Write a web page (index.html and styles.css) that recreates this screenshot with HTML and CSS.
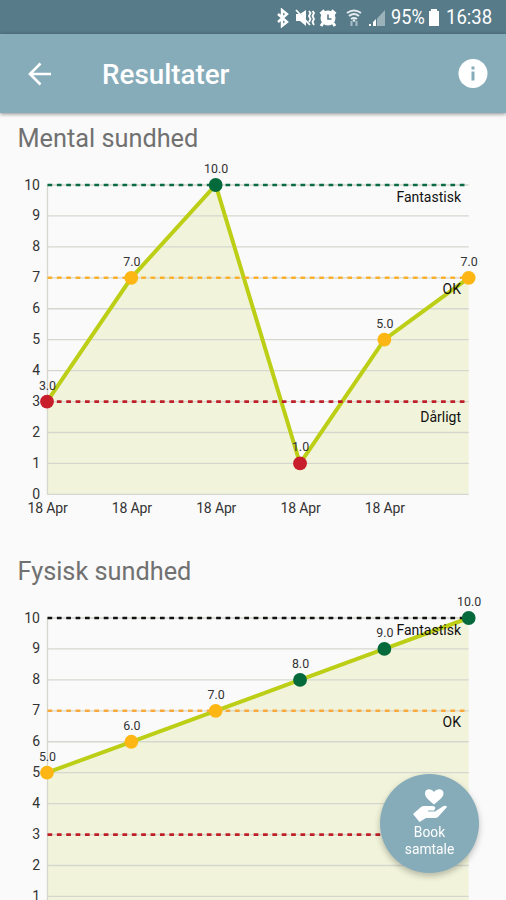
FILE: index.html
```html
<!DOCTYPE html>
<html lang="da">
<head>
    <meta charset="UTF-8">
    <meta name="viewport" content="width=device-width, initial-scale=1.0">
    <title>Resultater</title>
    <link rel="stylesheet" href="styles.css">
</head>
<body>
    <div class="status-bar">
        <svg class="bluetooth" width="14" height="20" viewBox="0 0 14 20">
            <path d="M2 6l9 8-5 4V2l5 4-9 8" fill="none" stroke="#fff" stroke-width="2.4"/>
        </svg>
        <svg class="mute" width="20" height="18" viewBox="0 0 20 18">
            <path d="M1 5h4l6-4v16l-6-5H1z" fill="#fff"/>
            <path d="M1 0l14 16" stroke="#577b89" stroke-width="1"/>
            <path d="M1 1l14 15M14 2l1.500 2-1.500 3 1.500 3-1.500 3M17.500 2l1.500 2-1.500 3 1.500 3-1.500 3 1.500 3" fill="none" stroke="#fff" stroke-width="1.8"/>
        </svg>
        <svg class="alarm" width="18" height="18" viewBox="0 0 18 18">
            <circle cx="9" cy="9" r="7.500" fill="#fff"/>
            <path d="M1.500 5l4-3.500M16.500 5l-4-3.500M4 14l-2 3M14 14l2 3" stroke="#fff" stroke-width="3"/>
            <path d="M9 5.500v4.500h3.500" fill="none" stroke="#577b89" stroke-width="1.6"/>
        </svg>
        <svg class="wifi" width="16" height="18" viewBox="0 0 16 18">
            <path d="M1 4q7-5 14 0M3 7q5-4 10 0M5 10q3-2 6 0" fill="none" stroke="#e4ebee" stroke-width="2.1"/>
            <circle cx="8" cy="11.500" r="1.3" fill="#e4ebee"/>
            <path d="M5.500 12v5M10.500 12v5" stroke="#a8bdc5" stroke-width="2"/>
        </svg>
        <svg class="signal" width="18" height="18" viewBox="0 0 18 18">
            <path d="M9 9.500l8-8.500v16H9z" fill="#9bb2bb"/>
            <path d="M1 15h2v2H1zM5 13l3-3V17H5z" fill="#fff"/>
        </svg>
        <span class="status-text percent">95%</span>
        <svg class="battery" width="12" height="18" viewBox="0 0 12 18">
            <path d="M1 2h2V0h6v2h2v15H1z" fill="#fff"/>
        </svg>
        <span class="status-text clock">16:38</span>
    </div>

    <header class="toolbar">
        <svg class="back" width="24" height="24" viewBox="0 0 24 24">
            <path d="M23 12H2M12.500 1.500L2 12l10.500 10.500" fill="none" stroke="#fff" stroke-width="2.6"/>
        </svg>
        <h1>Resultater</h1>
        <svg class="info" width="30" height="30" viewBox="0 0 30 30">
            <circle cx="15" cy="14.500" r="14.500" fill="#fff"/>
            <path d="M13.500 7.500h3v3h-3zM13.500 12.500h3v9h-3z" fill="#86acba"/>
        </svg>
    </header>

    <main>
        <section class="result">
            <h2>Mental sundhed</h2>
            <svg class="chart" id="mental" width="506" height="391"></svg>
        </section>
        <section class="result">
            <h2>Fysisk sundhed</h2>
            <svg class="chart" id="fysisk" width="506" height="391"></svg>
        </section>
    </main>

    <button class="book">
        <svg width="34" height="34" viewBox="0 0 34 34">
            <path d="M21 16.500C16.500 12.500 12 9.500 12 5.500C12 .5 18 0 21 4C24 0 30.500 .5 30.500 5.500C30.500 9.500 25.500 12.500 21 16.500z" fill="#fff"/>
            <path d="M0 26l8-7q1.500-1 3-1h9q3 .5 2 3l-1 1.500h-6v1h7l8.500-5.500q3-1 3.500 1L25 29q-1 1-3 1h-9l-6.500 4z" fill="#fff"/>
        </svg>
        <span>Book<br>samtale</span>
    </button>

    <script>
        const left = 47;
        const right = 468.7;
        const top10 = 30;
        const step = 30.94;
        const stepX = (right - left) / 5;

        function y(value) {
            return top10 + (10 - value) * step;
        }

        function pointColor(value) {
            if (value <= 3) return '#c81e2b';
            if (value <= 7) return '#fdb614';
            return '#046a3c';
        }

        function drawChart(id, values, limits) {
            const points = values.map((v, i) => [left + i * stepX, y(v)]);
            const line = points.map(p => p.join(',')).join(' ');
            let svg = '';

            svg += `<polygon class="area" points="${left},${y(0)} ${line} ${right},${y(0)}"/>`;
            for (let i = 0; i <= 10; i++) {
                svg += `<line class="grid" x1="${left}" y1="${y(i)}" x2="${right}" y2="${y(i)}"/>`;
                svg += `<text class="axis-y" x="40" y="${y(i) + 4.5}">${i}</text>`;
            }
            svg += `<line class="grid" x1="${left + 0.5}" y1="${y(10)}" x2="${left + 0.5}" y2="${y(0)}"/>`;
            for (let i = 0; i < 5; i++) {
                svg += `<text class="axis-x" x="${left + 0.5 + i * stepX}" y="${y(0) + 19}">18 Apr</text>`;
            }

            svg += `<polyline class="line" points="${line}"/>`;
            limits.forEach(l => {
                svg += `<line class="limit" stroke="${l.color}" x1="${left + 0.5}" y1="${y(l.value)}" x2="${right}" y2="${y(l.value)}"/>`;
            });
            points.forEach((p, i) => {
                svg += `<circle cx="${p[0]}" cy="${p[1]}" r="6.9" fill="${pointColor(values[i])}"/>`;
                svg += `<text class="value" x="${p[0] + 0.5}" y="${p[1] - 12}">${values[i].toFixed(1)}</text>`;
            });
            limits.forEach(l => {
                svg += `<text class="limit-label" x="461" y="${y(l.value) + l.offset}">${l.label}</text>`;
            });

            document.getElementById(id).innerHTML = svg;
        }

        drawChart('mental', [3, 7, 10, 1, 5, 7], [
            { value: 10, label: 'Fantastisk', color: '#0b6b45', offset: 17 },
            { value: 7, label: 'OK', color: '#fbb02c', offset: 16 },
            { value: 3, label: 'Dårligt', color: '#bd2028', offset: 20 }
        ]);
        drawChart('fysisk', [5, 6, 7, 8, 9, 10], [
            { value: 10, label: 'Fantastisk', color: '#111', offset: 17 },
            { value: 7, label: 'OK', color: '#fba93a', offset: 16 }, 
            { value: 3, label: 'Dårligt', color: '#bd2028', offset: 20 }
        ]);
    </script>
</body>
</html>
```

FILE: styles.css
```css
* {
    box-sizing: border-box;
}

body {
    margin: 0;
    height: 900px;
    overflow: hidden;
    background: #fafafa;
    font-family: Roboto, "Liberation Sans", sans-serif;
}

.status-bar {
    display: flex;
    align-items: center;
    justify-content: flex-end;
    height: 34px;
    padding-right: 14px;
    padding-top: 2px;
    background: #577b89;
    color: #fff;
}

.mute {
    margin-left: 5px;
}

.alarm {
    margin-left: 4px;
}

.wifi {
    margin-left: 9px;
}

.signal {
    margin-left: 6px;
}

.status-text {
    font-size: 19.5px;
    line-height: 32px;
}

.percent {
    width: 34px;
    margin-left: 5px;
    transform: scaleX(0.93);
    transform-origin: left;
}

.battery {
    margin-left: 3px;
}

.clock {
    width: 46px;
    margin-left: 6px;
    transform: scaleX(0.95);
    transform-origin: left;
}

.toolbar {
    position: relative;
    display: flex;
    align-items: center;
    height: 79px;
    padding: 0 18px 0 28px;
    background: #86acba;
    color: #fff;
    box-shadow: 0 1px 4px rgba(0, 0, 0, 0.45);
}

.toolbar h1 {
    flex: 1;
    margin: 2px 0 0 50px;
    font-size: 27.8px;
    font-weight: 500;
}

.result {
    height: 433px;
    padding-top: 10px;
}

.result h2 {
    margin: 0;
    padding-left: 17.5px;
    font-size: 25.3px;
    font-weight: 400;
    line-height: 32px;
    color: #717171;
}

.chart {
    display: block;
}

.area {
    fill: #f1f4da;
}

.grid {
    stroke: #d5d7ce;
    stroke-width: 1.3;
}

.line {
    fill: none;
    stroke: #bccf16;
    stroke-width: 4;
}

.limit {
    stroke-width: 2.6;
    stroke-dasharray: 4.7 4.67;
}

.chart text {
    font-size: 14px;
    fill: #333;
}

.chart .axis-y,
.chart .limit-label {
    text-anchor: end;
}

.chart .axis-x,
.chart .value {
    text-anchor: middle;
}

.chart .axis-x {
    letter-spacing: -0.15px;
}

.chart .value {
    font-size: 12.4px;
}

.chart .limit-label {
    fill: #111;
}

.book {
    position: fixed;
    left: 380px;
    top: 774px;
    display: flex;
    flex-direction: column;
    align-items: center;
    width: 99px;
    height: 99px;
    padding: 14px 0 0;
    border: none;
    border-radius: 50%;
    background: #86acba;
    color: #fff;
    font-family: inherit;
    font-size: 13.8px;
    line-height: 17px;
    box-shadow: 0 3px 6px rgba(0, 0, 0, 0.25);
}

.book span {
    margin-top: 2px;
}
```
